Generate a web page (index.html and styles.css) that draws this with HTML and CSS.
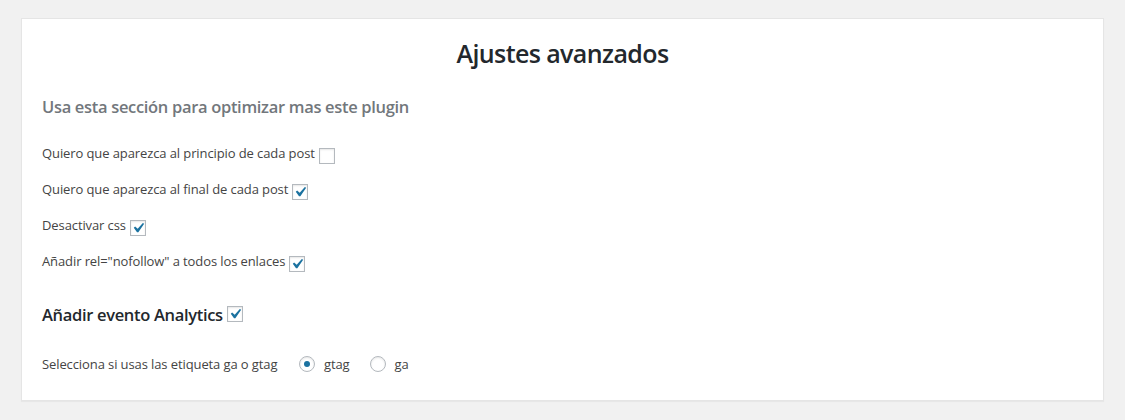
FILE: index.html
```html
<!DOCTYPE html>
<html lang="es">
<head>
<meta charset="utf-8">
<title>Ajustes avanzados</title>
<link rel="stylesheet" href="styles.css">
</head>
<body>
<div class="card">
  <h1 class="title">Ajustes avanzados</h1>
  <h3 class="subtitle">Usa esta sección para optimizar mas este plugin</h3>

  <div class="row"><span>Quiero que aparezca al principio de cada post</span><span class="cb"></span></div>
  <div class="row row-gap"><span>Quiero que aparezca al final de cada post</span><span class="cb"><svg viewBox="0 0 20 20"><path d="M14.83 4.89l1.34.94-5.81 8.38H9.02L5.78 9.67l1.34-1.25 2.57 2.4z"/></svg></span></div>
  <div class="row row-gap"><span>Desactivar css</span><span class="cb"><svg viewBox="0 0 20 20"><path d="M14.83 4.89l1.34.94-5.81 8.38H9.02L5.78 9.67l1.34-1.25 2.57 2.4z"/></svg></span></div>
  <div class="row row-gap"><span>Añadir rel="nofollow" a todos los enlaces</span><span class="cb"><svg viewBox="0 0 20 20"><path d="M14.83 4.89l1.34.94-5.81 8.38H9.02L5.78 9.67l1.34-1.25 2.57 2.4z"/></svg></span></div>

  <div class="row analytics"><span>Añadir evento Analytics</span><span class="cb"><svg viewBox="0 0 20 20"><path d="M14.83 4.89l1.34.94-5.81 8.38H9.02L5.78 9.67l1.34-1.25 2.57 2.4z"/></svg></span></div>

  <div class="row radios">
    <span class="radio-label">Selecciona si usas las etiqueta ga o gtag</span>
    <span class="opt"><span class="radio on"></span>gtag</span>
    <span class="opt"><span class="radio"></span>ga</span>
  </div>
</div>
</body>
</html>
```

FILE: styles.css
```css
html, body {
  margin: 0;
}
body {
  padding: 18px 21px;
  background: #f1f1f1;
  font-family: "Open Sans", "Noto Sans", sans-serif;
  font-size: 13px;
  color: #444;
}
.card {
  background: #fff;
  border: 1px solid #e5e5e5;
  box-shadow: 0 1px 1px rgba(0, 0, 0, 0.04);
  height: 381px;
  box-sizing: content-box;
  padding: 0 20px;
}
.title {
  margin: 17px 0 0;
  font-size: 25px;
  line-height: 34px;
  font-weight: 600;
  letter-spacing: -0.6px;
  color: #23282d;
  text-align: center;
}
.subtitle {
  margin: 26px 0 0;
  font-size: 16.5px;
  line-height: 22px;
  font-weight: 600;
  letter-spacing: -0.32px;
  color: #72777c;
}
.row {
  display: flex;
  align-items: center;
  gap: 4px;
  height: 24px;
  margin-top: 23px;
  letter-spacing: -0.1px;
}
.row-gap {
  margin-top: 12px;
}
.cb {
  width: 16px;
  height: 16px;
  box-sizing: border-box;
  border: 1px solid #b4b9be;
  background: #fff;
  box-shadow: inset 0 1px 2px rgba(0, 0, 0, 0.1);
  display: flex;
  align-items: center;
  justify-content: center;
  margin-top: 5px;
}
.cb svg {
  width: 20px;
  height: 20px;
  fill: #1b72a0;
  flex: none;
}
.analytics {
  margin-top: 29px;
  font-size: 16.5px;
  font-weight: 600;
  letter-spacing: -0.32px;
  color: #23282d;
}
.analytics .cb {
  margin-top: 0;
}
.radios {
  margin-top: 26px;
  gap: 0;
}
.radio-label {
  width: 257px;
}
.opt {
  display: flex;
  align-items: center;
  gap: 9px;
  margin-right: 20px;
}
.radio {
  width: 16px;
  height: 16px;
  box-sizing: border-box;
  border: 1px solid #b4b9be;
  border-radius: 50%;
  background: #fff;
  box-shadow: inset 0 1px 2px rgba(0, 0, 0, 0.1);
  display: flex;
  align-items: center;
  justify-content: center;
}
.radio.on::before {
  content: "";
  width: 6px;
  height: 6px;
  border-radius: 50%;
  background: #1b72a0;
}
```
